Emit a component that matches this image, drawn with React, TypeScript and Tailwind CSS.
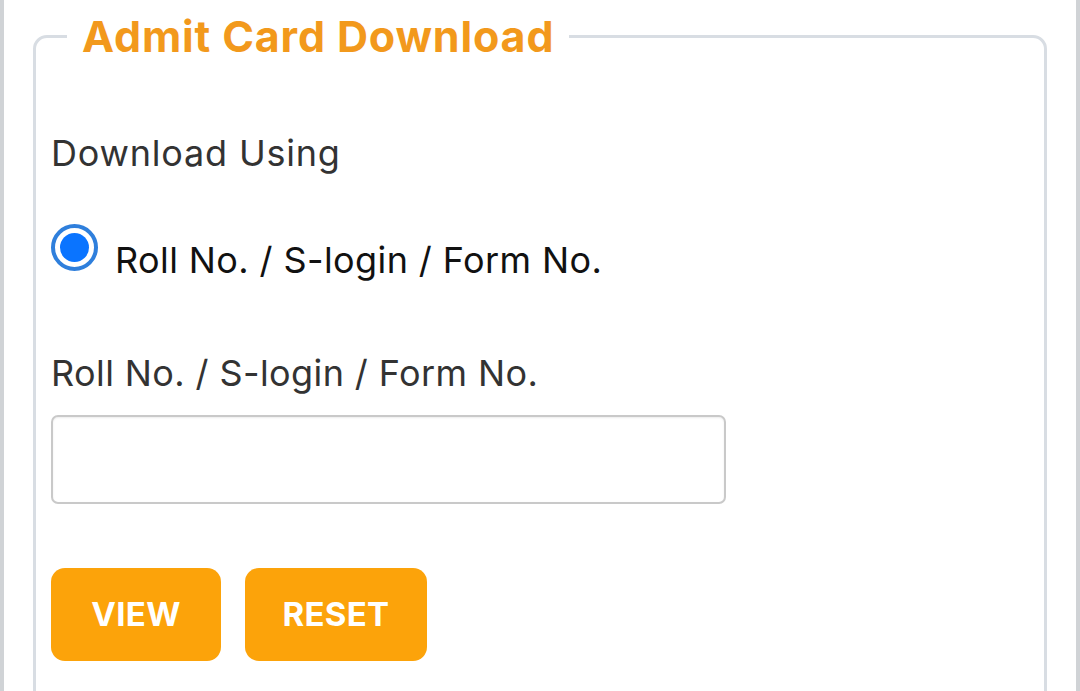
import React from "react";

export default function App() {
  return (
    <div className="w-[1080px] h-[691px] overflow-hidden bg-white flex" style={{ fontFamily: "Inter, 'Noto Sans', sans-serif" }}>
      <div className="w-[4px] h-full bg-[#d0d3d6]" />
      <div className="flex-1 px-[29px] pt-[10px]">
        <fieldset className="border-[3px] border-[#d8dde3] rounded-[14px] pl-[15px] pr-[20px] pb-[40px] h-[720px]">
          <legend className="ml-[16px] px-[15px] text-[43px] font-bold text-[#f2991c] leading-[52px] tracking-[0.85px]">
            Admit Card Download
          </legend>
          <div className="text-[36px] text-[#333] mt-[71px] leading-[40px] tracking-[0.8px]">Download Using</div>
          <label className="flex items-start mt-[51px] gap-[17px]">
            <span className="w-[47px] h-[47px] shrink-0 rounded-full border-[4px] border-[#2f7fdc] flex items-center justify-center bg-white">
              <span className="w-[29px] h-[29px] rounded-full bg-[#0a74ff]" />
            </span>
            <span className="text-[36px] text-[#111] leading-[40px] mt-[16px] tracking-[0.4px]">Roll No. / S-login / Form No.</span>
          </label>
          <div className="text-[36px] text-[#333] mt-[73px] leading-[40px] tracking-[0.4px]">Roll No. / S-login / Form No.</div>
          <div className="mt-[22px] w-[675px] h-[89px] border-[2px] border-[#c9c9c9] rounded-[7px] bg-white shadow-[inset_0_1px_2px_rgba(0,0,0,0.08)]" />
          <div className="flex gap-[24px] mt-[64px]">
            <button className="w-[170px] h-[93px] rounded-[14px] bg-[#fca30a] text-white font-bold text-[33px] tracking-[0.3px]">VIEW</button>
            <button className="w-[182px] h-[93px] rounded-[14px] bg-[#fca30a] text-white font-bold text-[33px] tracking-[0.3px]">RESET</button>
          </div>
        </fieldset>
      </div>
      <div className="w-[4px] h-full bg-[#d0d3d6]" />
    </div>
  );
}
